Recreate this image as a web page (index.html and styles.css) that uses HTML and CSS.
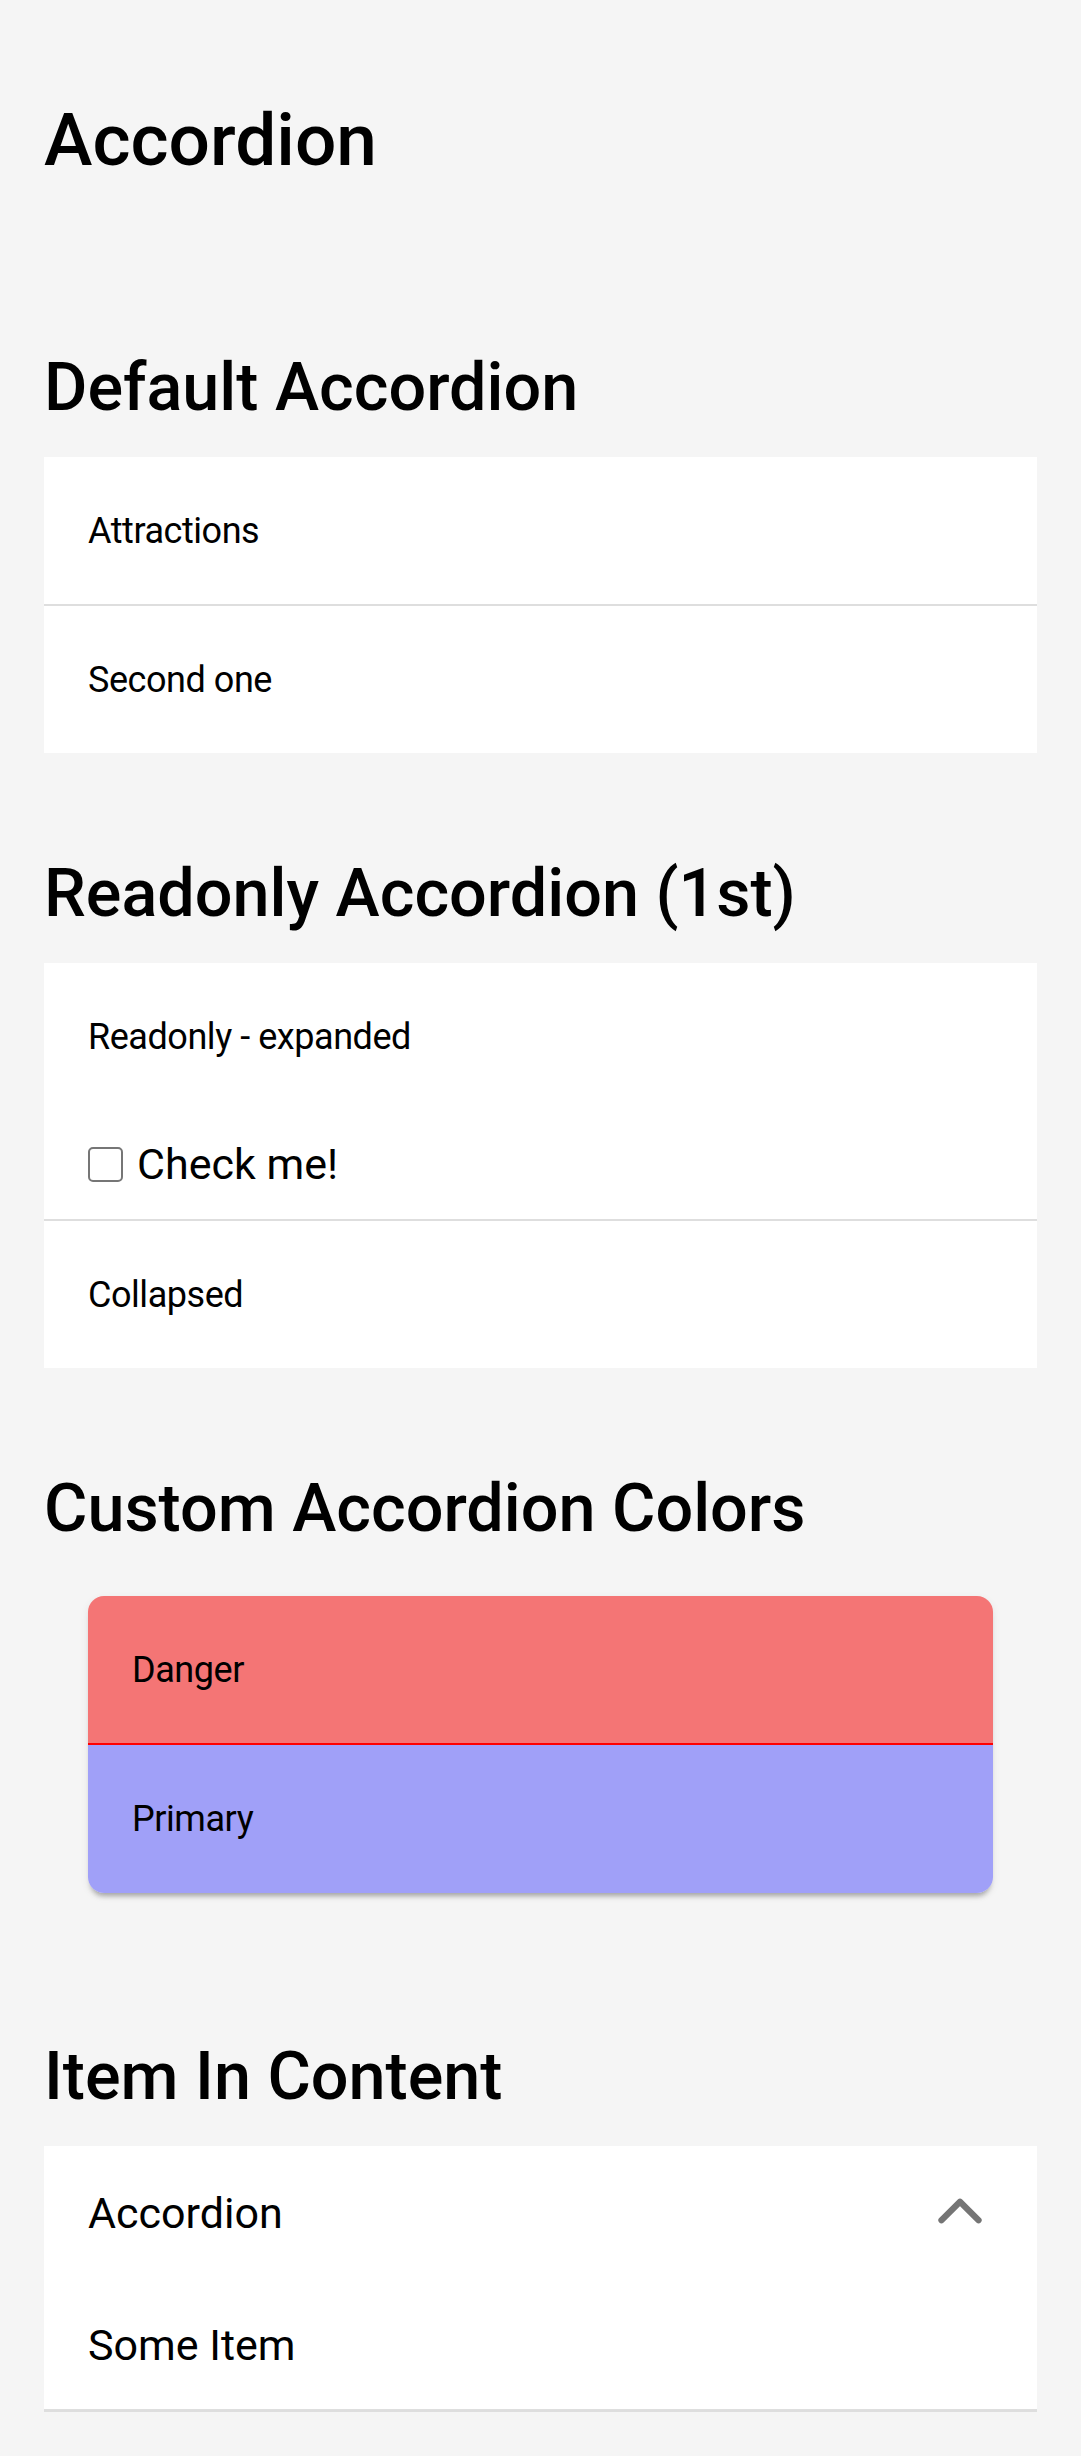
FILE: index.html
```html
<!DOCTYPE html>
<html lang="en">
<head>
<meta charset="utf-8">
<title>Accordion</title>
<link rel="stylesheet" href="styles.css">
</head>
<body>
<main class="page">
  <h1 class="page-title">Accordion</h1>

  <section class="demo">
    <h2 class="demo-title">Default Accordion</h2>
    <div class="acc-group">
      <div class="acc has-divider">
        <div class="acc-header"><span class="label-sm">Attractions</span></div>
      </div>
      <div class="acc">
        <div class="acc-header"><span class="label-sm">Second one</span></div>
      </div>
    </div>
  </section>

  <section class="demo">
    <h2 class="demo-title">Readonly Accordion (1st)</h2>
    <div class="acc-group">
      <div class="acc has-divider">
        <div class="acc-header"><span class="label-sm">Readonly - expanded</span></div>
        <div class="acc-content">
          <label class="check">
            <span class="check-box"></span>
            <span class="check-text">Check me!</span>
          </label>
        </div>
      </div>
      <div class="acc">
        <div class="acc-header"><span class="label-sm">Collapsed</span></div>
      </div>
    </div>
  </section>

  <section class="demo">
    <h2 class="demo-title">Custom Accordion Colors</h2>
    <div class="acc-group acc-group-custom">
      <div class="acc acc-danger">
        <div class="acc-header"><span class="label-sm">Danger</span></div>
      </div>
      <div class="acc acc-primary">
        <div class="acc-header acc-header-tall"><span class="label-sm">Primary</span></div>
      </div>
    </div>
  </section>

  <section class="demo">
    <h2 class="demo-title">Item In Content</h2>
    <div class="acc-group">
      <div class="acc">
        <div class="acc-header acc-header-md">
          <span class="label-md">Accordion</span>
          <svg class="chevron" viewBox="0 0 512 512" aria-hidden="true">
            <path d="M112 328l144-144 144 144" fill="none" stroke="currentColor" stroke-width="48" stroke-linecap="round" stroke-linejoin="round"/>
          </svg>
        </div>
        <div class="acc-item">
          <span class="label-md">Some Item</span>
        </div>
      </div>
    </div>
  </section>
</main>
</body>
</html>
```
FILE: styles.css
```css
html, body {
  margin: 0;
  padding: 0;
  background: #f5f5f5;
}

body {
  font-family: Roboto, "Noto Sans", "Liberation Sans", sans-serif;
  color: #000;
}

.page {
  display: flex;
  flex-direction: column;
  padding: 0 44px;
}

.page-title {
  margin: 97px 0 63px;
  font-size: 73px;
  line-height: 87px;
  font-weight: 500;
}

.demo {
  display: flex;
  flex-direction: column;
  margin-top: 102px;
}

.demo-title {
  margin: 0 0 31px;
  font-size: 66.5px;
  line-height: 77px;
  font-weight: 500;
}

.acc-group {
  background: #fff;
}

.acc.has-divider {
  border-bottom: 2px solid #dedede;
}

.acc-header {
  display: flex;
  align-items: center;
  height: 147px;
  padding: 0 44px;
}

.acc-header-tall {
  height: 148px;
}

.label-sm {
  font-size: 36px;
  letter-spacing: -0.45px;
}

.label-md {
  font-size: 43px;
}

.acc-content {
  display: flex;
  align-items: center;
  height: 109px;
  padding: 0 44px;
}

.check {
  display: flex;
  align-items: center;
  gap: 14px;
}

.check-box {
  box-sizing: border-box;
  width: 35px;
  height: 35px;
  border: 2.5px solid #767676;
  border-radius: 5px;
  background: #fff;
}

.check-text {
  font-size: 43px;
  line-height: 1;
}

.acc-group-custom {
  margin: 18px 44px 43px;
  border-radius: 16px;
  overflow: hidden;
  background: transparent;
  box-shadow: 0 6px 5px -3px rgba(0, 0, 0, 0.28), 0 3px 8px rgba(0, 0, 0, 0.08);
}

.acc-danger {
  background: #f47575;
  border-bottom: 2px solid #ff0000;
}

.acc-primary {
  background: #a0a0f8;
}

.acc-header-md {
  height: 134px;
  justify-content: space-between;
}

.chevron {
  width: 66px;
  height: 66px;
  margin-top: -5px;
  color: #757575;
}

.acc-item {
  display: flex;
  align-items: center;
  height: 129px;
  padding: 0 44px;
  border-bottom: 3px solid #dedede;
}
```
